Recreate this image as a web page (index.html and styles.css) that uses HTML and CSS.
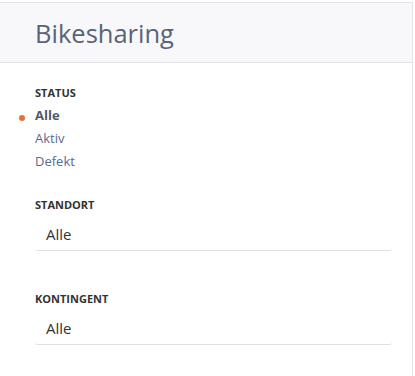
FILE: index.html
```html
<!DOCTYPE html>
<html lang="de">
<head>
    <meta charset="UTF-8">
    <meta name="viewport" content="width=device-width, initial-scale=1.0">
    <title>Bikesharing</title>
    <link rel="stylesheet" href="styles.css">
</head>
<body>
    <div class="panel">
        <div class="panel-header">
            <h1>Bikesharing</h1>
        </div>

        <div class="panel-body">
            <div class="filter filter-status">
                <div class="filter-label">Status</div>
                <ul class="filter-list">
                    <li class="active">Alle</li>
                    <li>Aktiv</li>
                    <li>Defekt</li>
                </ul>
            </div>

            <div class="filter filter-standort">
                <div class="filter-label">Standort</div>
                <div class="select">Alle</div>
            </div>

            <div class="filter filter-kontingent">
                <div class="filter-label">Kontingent</div>
                <div class="select">Alle</div>
            </div>
        </div>
    </div>
</body>
</html>
```

FILE: styles.css
```css
body {
    margin: 0;
    font-family: "Open Sans", "Noto Sans", sans-serif;
    background-color: #fff;
}
.panel {
    width: 413px;
    height: 374px;
    margin-top: 2px;
    border-top: 1px solid #e4e4e7;
    border-right: 1px solid #e4e4e7;
    box-sizing: border-box;
}
.panel-header {
    background: #f8f8fb;
    padding: 12px 35px 11px;
    border-bottom: 1px solid #e2e2e6;
}
h1 {
    margin: 0;
    font-size: 25.5px;
    line-height: 36px;
    font-weight: 400;
    color: #5a6377;
}
.panel-body {
    padding: 22px 20px 0 35px;
}
.filter-label {
    font-size: 11px;
    line-height: 16px;
    font-weight: 700;
    text-transform: uppercase;
    color: #333;
}
.filter-list {
    list-style: none;
    margin: 3px 0 0;
    padding: 0;
}
.filter-list li {
    position: relative;
    font-size: 13px;
    line-height: 23px;
    color: #5b6a8b;
}
.filter-list li.active {
    font-weight: 700;
    color: #4f5a70;
}
.filter-list li.active::before {
    content: "";
    position: absolute;
    left: -16px;
    top: 11px;
    width: 6px;
    height: 6px;
    border-radius: 50%;
    background: #e8703f;
}
.filter-standort {
    margin-top: 24px;
}
.filter-kontingent {
    margin-top: 40px;
}
.select {
    margin-top: 11px;
    padding: 0 11px 6px;
    font-size: 15px;
    line-height: 20px;
    color: #333;
    border-bottom: 1px solid #e0e0e0;
    border-radius: 0 0 3px 3px;
}
```
